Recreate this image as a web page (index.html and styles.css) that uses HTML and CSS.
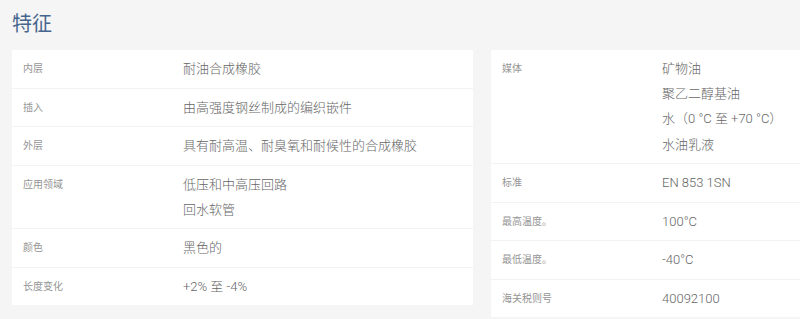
FILE: index.html
```html
<!DOCTYPE html>
<html lang="zh">
<head>
<meta charset="utf-8">
<link rel="stylesheet" href="styles.css">
</head>
<body>
<div class="page">
  <h2 class="title">特征</h2>
  <div class="cols">
    <div class="card">
      <div class="row"><div class="label">内层</div><div class="value">耐油合成橡胶</div></div>
      <div class="row"><div class="label">插入</div><div class="value">由高强度钢丝制成的编织嵌件</div></div>
      <div class="row"><div class="label">外层</div><div class="value">具有耐高温、耐臭氧和耐候性的合成橡胶</div></div>
      <div class="row"><div class="label">应用领域</div><div class="value">低压和中高压回路<br>回水软管</div></div>
      <div class="row"><div class="label">颜色</div><div class="value">黑色的</div></div>
      <div class="row"><div class="label">长度变化</div><div class="value">+2% 至 -4%</div></div>
    </div>
    <div class="card">
      <div class="row"><div class="label">媒体</div><div class="value">矿物油<br>聚乙二醇基油<br>水（0 °C 至 +70 °C）<br>水油乳液</div></div>
      <div class="row"><div class="label">标准</div><div class="value">EN 853 1SN</div></div>
      <div class="row"><div class="label">最高温度。</div><div class="value">100°C</div></div>
      <div class="row"><div class="label">最低温度。</div><div class="value">-40°C</div></div>
      <div class="row"><div class="label">海关税则号</div><div class="value">40092100</div></div>
    </div>
  </div>
</div>
</body>
</html>
```

FILE: styles.css
```css
html, body {
  margin: 0;
  padding: 0;
  background: #f5f5f5;
  overflow: hidden;
}
body {
  font-family: Roboto, "Noto Sans CJK SC", sans-serif;
}
.page {
  padding: 0 0 0 12px;
  width: 788px;
  overflow: hidden;
}
.title {
  margin: 0;
  padding-top: 9px;
  height: 50px;
  box-sizing: border-box;
  font-size: 20px;
  line-height: 30px;
  font-weight: 400;
  color: #46658d;
}
.cols {
  display: flex;
  align-items: flex-start;
  gap: 18px;
}
.card {
  flex: 0 0 461px;
  background: #fff;
}
.row {
  display: grid;
  grid-template-columns: 171px 1fr;
  padding: 6px 0 6.3px;
  border-bottom: 1px solid #f3f3f3;
  line-height: 25.2px;
}
.row:last-child {
  border-bottom: 0;
}
.label {
  padding-left: 11px;
  font-size: 10px;
  color: #959595;
}
.value {
  font-size: 13px;
  font-weight: 300;
  color: #666;
}
```
